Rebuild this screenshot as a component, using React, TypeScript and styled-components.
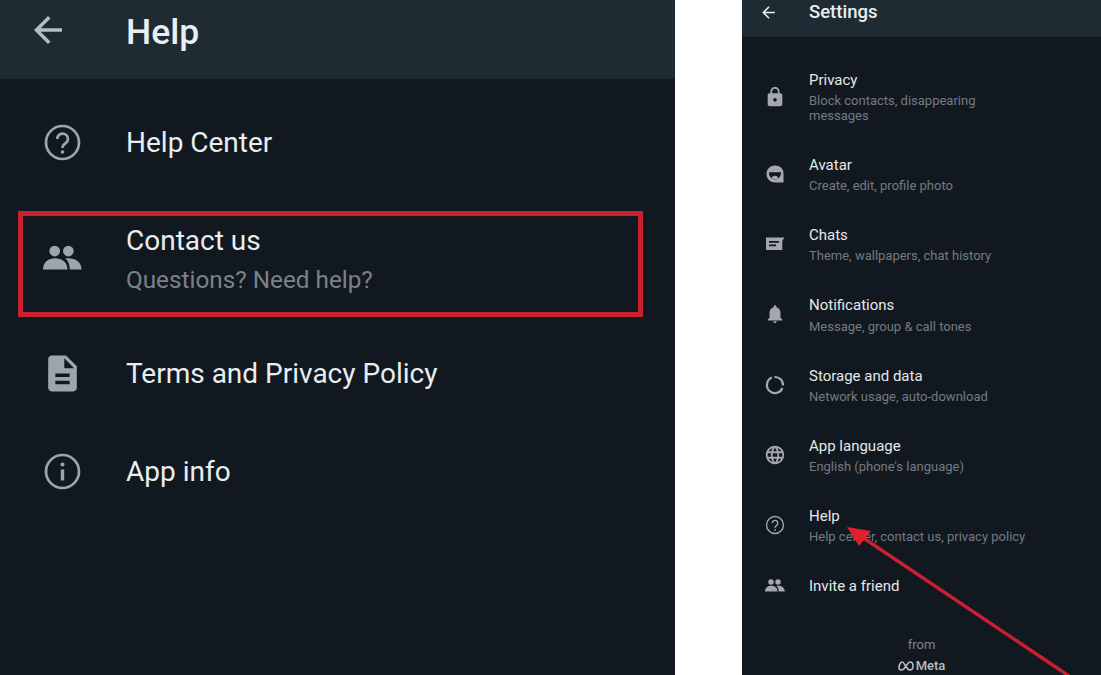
import React from "react";
import styled, { createGlobalStyle } from "styled-components";
import { MdArrowBack, MdDescription, MdLanguage, MdLock, MdNotifications } from "react-icons/md";

const GlobalStyle = createGlobalStyle`
  html, body {
    margin: 0;
    padding: 0;
    background: #fff;
    overflow: hidden;
  }
  body {
    font-family: "Roboto", "Liberation Sans", sans-serif;
  }
`;

const Page = styled.div`
  display: flex;
  gap: 67px;
  width: 1101px;
  height: 675px;
  overflow: hidden;
  position: relative;
`;

const Panel = styled.section<{ $width: number }>`
  width: ${(p) => p.$width}px;
  height: 675px;
  background: #121820;
  display: flex;
  flex-direction: column;
  position: relative;
  overflow: hidden;
`;

const BigHeader = styled.header`
  height: 79px;
  background: #1f2b33;
  display: flex;
  align-items: center;
  color: #e9eef0;
`;

const BigBack = styled.div`
  width: 126px;
  padding: 0 0 19px 27px;
  box-sizing: border-box;
  display: flex;
  color: #b4bfc4;
  font-size: 42px;
`;

const BigTitle = styled.h1`
  margin: 0 0 16px;
  font-size: 35.5px;
  font-weight: 500;
`;

const BigList = styled.div`
  padding-top: 15px;
  display: flex;
  flex-direction: column;
`;

const BigRow = styled.div<{ $height: number }>`
  height: ${(p) => p.$height}px;
  display: flex;
  align-items: center;
  position: relative;
`;

const BigIcon = styled.div`
  width: 124px;
  margin-right: 2px;
  padding-bottom: 2px;
  display: flex;
  justify-content: center;
  color: #9ea5aa;
  font-size: 43px;
`;

const BigLabel = styled.div`
  font-size: 28px;
  line-height: 36px;
  color: #e8edef;
`;

const BigSub = styled.div`
  font-size: 24.3px;
  line-height: 32px;
  margin-top: 5px;
  color: #79828a;
`;

const RedBox = styled.div`
  position: absolute;
  left: 18px;
  top: 19px;
  width: 625px;
  height: 106px;
  box-sizing: border-box;
  border: 5px solid #c8202f;
`;

const SmallHeader = styled.header`
  height: 37px;
  background: #1f2b33;
  display: flex;
  align-items: center;
  color: #e9eef0;
`;

const SmallBack = styled.div`
  width: 67px;
  padding: 0 0 12px 17px;
  box-sizing: border-box;
  display: flex;
  font-size: 19px;
`;

const SmallTitle = styled.h2`
  margin: 0 0 13px;
  font-size: 18.5px;
  font-weight: 500;
`;

const SmallList = styled.div`
  padding-top: 33px;
  display: flex;
  flex-direction: column;
  gap: 32px;
`;

const SmallRow = styled.div`
  display: flex;
  align-items: center;
`;

const SmallIcon = styled.div`
  width: 66px;
  margin-right: 1px;
  display: flex;
  justify-content: center;
  color: #a2a8ac;
  font-size: 22px;
`;

const SmallLabel = styled.div`
  font-size: 15px;
  line-height: 20px;
  color: #e4e8ea;
`;

const SmallSub = styled.div`
  font-size: 13px;
  line-height: 15px;
  margin-top: 3.15px;
  color: #737b82;
`;

const Footer = styled.footer`
  display: flex;
  flex-direction: column;
  align-items: center;
  margin-top: 41px;
`;

const From = styled.div`
  font-size: 13px;
  line-height: 16px;
  color: #7d858b;
`;

const MetaMark = styled.div`
  display: flex;
  align-items: center;
  gap: 2px;
  margin-top: 5px;
  font-size: 13px;
  line-height: 16px;
  font-weight: 500;
  color: #b9bec2;
`;

const Arrow = styled.svg`
  position: absolute;
  left: 0;
  top: 0;
  pointer-events: none;
`;

const HelpIcon = () => (
  <svg width="1em" height="1em" viewBox="0 0 43 43" fill="none" stroke="currentColor" strokeWidth="2.700">
    <circle cx="21.500" cy="21.500" r="16.500" />
    <path d="M16.300 18a5.300 5.300 0 1 1 8.400 4.200c-2 1.400-3.200 2.400-3.200 4.800" />
    <circle cx="21.500" cy="31" r="1.800" fill="currentColor" stroke="none" />
  </svg>
);

const InfoIcon = () => (
  <svg width="1em" height="1em" viewBox="0 0 43 43" fill="none" stroke="currentColor" strokeWidth="2.700">
    <circle cx="21.500" cy="21.500" r="16.500" />
    <circle cx="21.500" cy="14.500" r="2" fill="currentColor" stroke="none" />
    <path d="M21.500 19.500v11" strokeWidth="3.400" />
  </svg>
);

const PeopleIcon = ({ size }: { size: number }) => (
  <svg width={size} height={size * 0.66} viewBox="0 0 40 26" fill="currentColor">
    <circle cx="12" cy="6" r="5.500" />
    <circle cx="26" cy="6" r="5.500" />
    <path d="M0 25C0 17 6 13.500 12.500 13.500S25 17 25 25z" />
    <path d="M23 13.600c1-.1 2-.1 3-.1 7 0 13.500 3.500 13.500 11.500H27.500c0-5-1.500-8.800-4.500-11.400z" />
  </svg>
);

const AvatarIcon = () => (
  <svg width="1em" height="1em" viewBox="0 0 22 22">
    <path
      fill="currentColor"
      d="M11 2.500c4.800 0 8.500 3 8.500 7.800v9.200h-8C6.500 19.500 2.500 16 2.500 11c0-5 3.700-8.500 8.500-8.500z"
    />
    <path fill="#121820" d="M5 9.300h12c.2 3.800-2.400 7.200-6 7.200S4.800 13.100 5 9.300z" />
    <path fill="currentColor" d="M7.500 15c.8-1.500 2-2.200 3.500-2.200s2.700.7 3.500 2.200c-1 .9-2.200 1.400-3.500 1.400S8.500 15.900 7.500 15z" />
  </svg>
);

const ChatsIcon = () => (
  <svg width="1em" height="1em" viewBox="0 0 22 22">
    <path
      fill="currentColor"
      fillRule="evenodd"
      d="M2 4.500h18.500l-2.200 3.300V17H2zM5 8v1.800h10V8zM5 11.500v1.800h7v-1.800z"
    />
  </svg>
);

const StorageIcon = () => (
  <svg width="1em" height="1em" viewBox="0 0 22 22" fill="none" stroke="currentColor" strokeWidth="2.200">
    <path d="M10.500 3A8 8 0 0 1 19 11.500" />
    <path d="M18.400 14A8 8 0 1 1 8 3.600" />
  </svg>
);

const MetaLogo = () => (
  <svg width="16" height="10" viewBox="0 0 16 10" fill="none" stroke="currentColor" strokeWidth="1.600">
    <path d="M1 7c0-3 1.500-6 3.300-6S9 9 11.500 9C13.600 9 15 7.500 15 5.200 15 2.800 13.700 1 12 1 9.500 1 6.500 9 4 9 2.200 9 1 8.300 1 7z" />
  </svg>
);

const smallRows = [
  { icon: <MdLock />, label: "Privacy", sub: ["Block contacts, disappearing", "messages"] },
  { icon: <AvatarIcon />, label: "Avatar", sub: ["Create, edit, profile photo"] },
  { icon: <ChatsIcon />, label: "Chats", sub: ["Theme, wallpapers, chat history"] },
  { icon: <MdNotifications />, label: "Notifications", sub: ["Message, group & call tones"] },
  { icon: <StorageIcon />, label: "Storage and data", sub: ["Network usage, auto-download"] },
  { icon: <MdLanguage />, label: "App language", sub: ["English (phone's language)"] },
  { icon: <HelpIcon />, label: "Help", sub: ["Help center, contact us, privacy policy"] },
  { icon: <PeopleIcon size={20} />, label: "Invite a friend", sub: [] },
];

const App = () => (
  <Page>
    <GlobalStyle />
    <Panel $width={675}>
      <BigHeader>
        <BigBack>
          <MdArrowBack />
        </BigBack>
        <BigTitle>Help</BigTitle>
      </BigHeader>
      <BigList>
        <BigRow $height={98}>
          <BigIcon>
            <HelpIcon />
          </BigIcon>
          <BigLabel>Help Center</BigLabel>
        </BigRow>
        <BigRow $height={134}>
          <BigIcon>
            <PeopleIcon size={39} />
          </BigIcon>
          <div>
            <BigLabel>Contact us</BigLabel>
            <BigSub>Questions? Need help?</BigSub>
          </div>
          <RedBox />
        </BigRow>
        <BigRow $height={96}>
          <BigIcon>
            <MdDescription />
          </BigIcon>
          <BigLabel>Terms and Privacy Policy</BigLabel>
        </BigRow>
        <BigRow $height={100}>
          <BigIcon>
            <InfoIcon />
          </BigIcon>
          <BigLabel>App info</BigLabel>
        </BigRow>
      </BigList>
    </Panel>
    <Panel $width={359}>
      <SmallHeader>
        <SmallBack>
          <MdArrowBack />
        </SmallBack>
        <SmallTitle>Settings</SmallTitle>
      </SmallHeader>
      <SmallList>
        {smallRows.map((row) => (
          <SmallRow key={row.label}>
            <SmallIcon>{row.icon}</SmallIcon>
            <div>
              <SmallLabel>{row.label}</SmallLabel>
              {row.sub.length > 0 && (
                <SmallSub>
                  {row.sub.map((line) => (
                    <div key={line}>{line}</div>
                  ))}
                </SmallSub>
              )}
            </div>
          </SmallRow>
        ))}
      </SmallList>
      <Footer>
        <From>from</From>
        <MetaMark>
          <MetaLogo />
          Meta
        </MetaMark>
      </Footer>
      <Arrow width="359" height="675" viewBox="0 0 359 675">
        <line x1="327" y1="676" x2="120" y2="537" stroke="#c9202f" strokeWidth="3.500" />
        <path d="M105 527L129 531L117 546Z" fill="#e2202d" />
      </Arrow>
    </Panel>
  </Page>
);

export default App;
